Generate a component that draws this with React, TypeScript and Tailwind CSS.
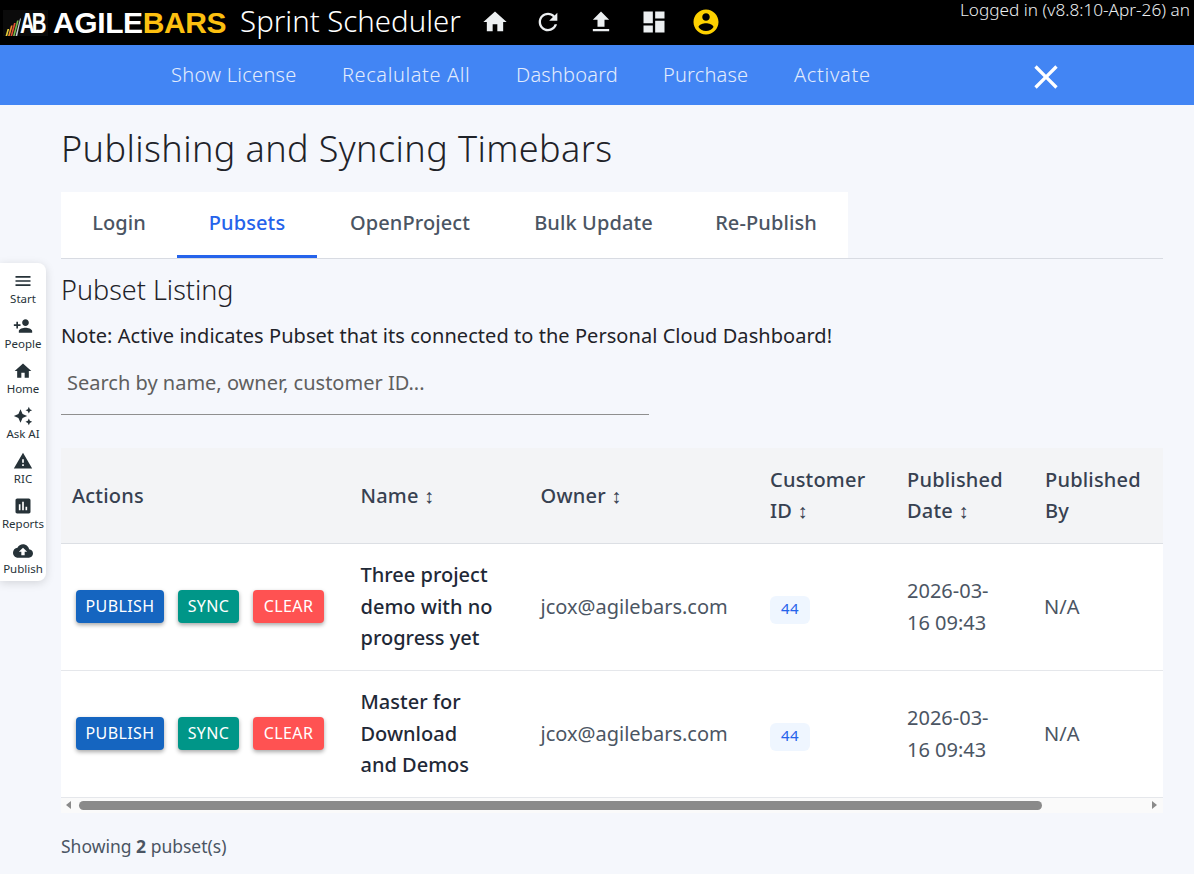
import type { ReactNode } from "react";

const ICONS = {
  home: "M10 20v-6h4v6h5v-8h3L12 3 2 12h3v8z",
  refresh:
    "M17.65 6.35C16.2 4.9 14.21 4 12 4c-4.42 0-7.99 3.58-7.99 8s3.57 8 7.99 8c3.73 0 6.84-2.55 7.73-6h-2.08c-.82 2.33-3.04 4-5.65 4-3.31 0-6-2.69-6-6s2.69-6 6-6c1.66 0 3.14.69 4.22 1.78L13 11h7V4l-2.35 2.35z",
  upload: "M9 16h6v-6h4l-7-7-7 7h4zm-4 2h14v2H5z",
  dashboard: "M3 13h8V3H3v10zm0 8h8v-6H3v6zm10 0h8V11h-8v10zm0-18v6h8V3h-8z",
  account:
    "M12 2C6.48 2 2 6.48 2 12s4.48 10 10 10 10-4.48 10-10S17.52 2 12 2zm0 3c1.66 0 3 1.34 3 3s-1.34 3-3 3-3-1.34-3-3 1.34-3 3-3zm0 14.2c-2.5 0-4.71-1.28-6-3.22.03-1.99 4-3.08 6-3.08 1.99 0 5.97 1.09 6 3.08-1.29 1.94-3.5 3.22-6 3.22z",
  close:
    "M19 6.41L17.59 5 12 10.59 6.41 5 5 6.41 10.59 12 5 17.59 6.41 19 12 13.41 17.59 19 19 17.59 13.41 12z",
  menu: "M3 18h18v-2H3v2zm0-5h18v-2H3v2zm0-7v2h18V6H3z",
  personAdd:
    "M15 12c2.21 0 4-1.79 4-4s-1.79-4-4-4-4 1.79-4 4 1.79 4 4 4zm-9-2V7H4v3H1v2h3v3h2v-3h3v-2H6zm9 4c-2.67 0-8 1.34-8 4v2h16v-2c0-2.66-5.33-4-8-4z",
  sparkle:
    "M19 9l1.25-2.75L23 5l-2.75-1.25L19 1l-1.25 2.75L15 5l2.75 1.25L19 9zm-7.5.5L9 4 6.5 9.5 1 12l5.5 2.5L9 20l2.5-5.5L17 12l-5.5-2.5zM19 15l-1.25 2.75L15 19l2.75 1.25L19 23l1.25-2.75L23 19l-2.75-1.25L19 15z",
  warning: "M1 21h22L12 2 1 21zm12-3h-2v-2h2v2zm0-4h-2v-4h2v4z",
  assessment:
    "M19 3H5c-1.1 0-2 .9-2 2v14c0 1.1.9 2 2 2h14c1.1 0 2-.9 2-2V5c0-1.1-.9-2-2-2zM9 17H7v-7h2v7zm4 0h-2V7h2v10zm4 0h-2v-4h2v4z",
  cloud:
    "M19.35 10.04C18.67 6.59 15.64 4 12 4 9.11 4 6.6 5.64 5.35 8.04 2.34 8.36 0 10.91 0 14c0 3.31 2.69 6 6 6h13c2.76 0 5-2.24 5-5 0-2.64-2.05-4.78-4.65-4.96zM14 13v4h-4v-4H7l5-5 5 5h-3z",
};

function Icon({ name, className }: { name: keyof typeof ICONS; className: string }) {
  return (
    <svg viewBox="0 0 24 24" fill="currentColor" className={className}>
      <path d={ICONS[name]} />
    </svg>
  );
}

function Logo() {
  return (
    <div className="flex items-center">
      <div className="relative h-[26px] w-[45px] shrink-0 bg-[#0b0b0b]">
        <svg viewBox="0 0 16 18" className="absolute left-[2px] top-[8px] h-[18px] w-[16px]">
          <path d="M0.5 18 L2.5 11 L4.2 11 L2.2 18z" fill="#e3cf3a" />
          <path d="M3 18 L6 7.5 L7.7 7.5 L4.7 18z" fill="#ee9030" />
          <path d="M5.5 18 L9 5 L10.7 5 L7.2 18z" fill="#e24f33" />
          <path d="M8 18 L12 2.5 L13.7 2.5 L9.7 18z" fill="#79b84a" />
          <path d="M10.5 18 L15 0.5 L16 0.5 L12.2 18z" fill="#c3ccd1" />
        </svg>
        <span className="absolute left-[17px] top-[-2px] origin-left scale-x-[0.7] font-['Liberation_Sans',sans-serif] text-[29px] font-bold leading-[30px] tracking-[-4px] text-white">
          AB
        </span>
      </div>
      <span className="ml-[5px] font-['Liberation_Sans',sans-serif] text-[30px] font-bold leading-[34px] tracking-[-0.4px] text-white">
        AGILE<span className="text-[#fcc010]">BARS</span>
      </span>
    </div>
  );
}

function TopBar() {
  return (
    <div className="relative flex h-[45px] items-center overflow-hidden bg-black pl-[3px]">
      <Logo />
      <span className="ml-[14px] whitespace-nowrap pb-[3px] text-[29.4px] font-light leading-[40px] text-white">
        Sprint Scheduler
      </span>
      <div className="ml-[20px] flex items-center gap-[25px] pb-[2px]">
        <Icon name="home" className="h-[28px] w-[28px] text-[#eceff1]" />
        <Icon name="refresh" className="h-[28px] w-[28px] text-[#eceff1]" />
        <Icon name="upload" className="h-[28px] w-[28px] text-[#eceff1]" />
        <Icon name="dashboard" className="h-[28px] w-[28px] text-[#eceff1]" />
        <Icon name="account" className="-ml-[2px] h-[30px] w-[30px] text-[#fdd100]" />
      </div>
      <span className="absolute left-[960px] top-0 whitespace-nowrap text-[17.2px] font-light leading-[20px] text-[#eceff1]">
        Logged in (v8.8:10-Apr-26) an
      </span>
    </div>
  );
}

function NavBar() {
  const links = [
    { label: "Show License", style: "w-[126px] tracking-[0.3px]" },
    { label: "Recalulate All", style: "w-[129px] tracking-[0.6px]" },
    { label: "Dashboard", style: "w-[102px] tracking-[0.2px]" },
    { label: "Purchase", style: "w-[86px] tracking-[0.2px]" },
    { label: "Activate", style: "w-[76px] tracking-[0.7px]" },
  ];
  return (
    <div className="flex h-[60px] items-center bg-[#4285f4] pl-[171px]">
      <div className="flex items-center gap-[45px]">
        {links.map((link) => (
          <span
            key={link.label}
            className={`${link.style} whitespace-nowrap text-[20px] font-light text-[#e3ecfd]`}
          >
            {link.label}
          </span>
        ))}
      </div>
      <Icon name="close" className="absolute left-[1026px] top-[57px] h-[40px] w-[40px] text-white" />
    </div>
  );
}

function SideRail() {
  const items: { name: keyof typeof ICONS; label: string }[] = [
    { name: "menu", label: "Start" },
    { name: "personAdd", label: "People" },
    { name: "home", label: "Home" },
    { name: "sparkle", label: "Ask AI" },
    { name: "warning", label: "RIC" },
    { name: "assessment", label: "Reports" },
    { name: "cloud", label: "Publish" },
  ];
  return (
    <div className="absolute left-0 top-[263px] flex h-[318px] w-[46px] flex-col items-center gap-[10px] rounded-r-lg bg-white pt-[8px] shadow-[0_2px_10px_rgba(0,0,0,0.14)]">
      {items.map((item) => (
        <div key={item.label} className="flex h-[35px] flex-col items-center text-[#263238]">
          <Icon name={item.name} className="h-[20px] w-[20px]" />
          <span className="text-[11.5px] leading-[15px]">{item.label}</span>
        </div>
      ))}
    </div>
  );
}

function Tabs() {
  const tabs = [
    { label: "Login", width: "w-[116px]" },
    { label: "Pubsets", width: "w-[140px]" },
    { label: "OpenProject", width: "w-[186px]" },
    { label: "Bulk Update", width: "w-[181px]" },
    { label: "Re-Publish", width: "w-[164px]" },
  ];
  return (
    <div className="mt-[17px] border-b border-[#d8dbe2]">
      <div className="flex h-[66px] w-[787px] bg-white">
        {tabs.map((tab) => (
          <div
            key={tab.label}
            className={
              tab.label === "Pubsets"
                ? `${tab.width} flex h-[66px] items-center justify-center border-b-[3px] border-[#2563eb] pb-[2px] text-[20px] font-medium tracking-[0.1px] text-[#2563eb]`
                : `${tab.width} flex h-[66px] items-center justify-center border-b-[3px] border-transparent pb-[2px] text-[20px] font-medium tracking-[0.1px] text-[#4b5563]`
            }
          >
            {tab.label}
          </div>
        ))}
      </div>
    </div>
  );
}

function ActionButton({ color, children }: { color: string; children: ReactNode }) {
  return (
    <button
      type="button"
      className={`flex h-[33px] items-center justify-center rounded-[4px] text-[16px] tracking-[0.4px] text-white shadow-[0_2px_4px_rgba(0,0,0,0.35)] ${color}`}
    >
      {children}
    </button>
  );
}

function Row({ name }: { name: ReactNode }) {
  return (
    <tr className="h-[127px] border-b border-[#e5e7eb] bg-white text-[20px] leading-[31.5px] text-[#4b5563]">
      <td className="pl-[15px]">
        <div className="flex gap-[14px]">
          <ActionButton color="w-[88px] bg-[#1565c0]">PUBLISH</ActionButton>
          <ActionButton color="w-[61px] bg-[#009688]">SYNC</ActionButton>
          <ActionButton color="w-[71px] bg-[#ff5252]">CLEAR</ActionButton>
        </div>
      </td>
      <td className="pl-[21.5px] pr-[26px] font-medium text-[#1f2937]">{name}</td>
      <td className="pl-[21.5px]">jcox@agilebars.com</td>
      <td className="pl-[21px]">
        <span className="mt-[6px] flex h-[28px] w-[40px] items-center justify-center rounded-[6px] bg-[#eff6ff] pb-[2px] text-[15px] tracking-[0.3px] text-[#2563eb]">
          44
        </span>
      </td>
      <td className="pl-[22px] pr-[20px]">2026-03-16 09:43</td>
      <td className="pl-[21px]">N/A</td>
    </tr>
  );
}

function Head({ pad, children }: { pad: string; children: ReactNode }) {
  return (
    <th className={`${pad} pr-[12px] text-left align-middle text-[20px] font-medium leading-[31.5px] tracking-[0.2px] text-[#374151]`}>
      {children}
    </th>
  );
}

function PubsetTable() {
  return (
    <div className="mt-[33px] w-[1102px] overflow-hidden">
      <table className="w-[1240px] table-fixed border-collapse">
        <colgroup>
          <col className="w-[278px]" />
          <col className="w-[180px]" />
          <col className="w-[230px]" />
          <col className="w-[136px]" />
          <col className="w-[138px]" />
          <col className="w-[278px]" />
        </colgroup>
        <thead>
          <tr className="h-[95px] border-b border-[#dcdfe4] bg-[#f3f4f6]">
            <Head pad="pl-[11px]">Actions</Head>
            <Head pad="pl-[21.5px]">Name ↕</Head>
            <Head pad="pl-[21.5px]">Owner ↕</Head>
            <Head pad="pl-[21px]">Customer ID ↕</Head>
            <Head pad="pl-[22px]">Published Date ↕</Head>
            <Head pad="pl-[22px] pr-[200px]">Published By</Head>
          </tr>
        </thead>
        <tbody>
          <Row name="Three project demo with no progress yet" />
          <Row name="Master for Download and Demos" />
        </tbody>
      </table>
      <div className="flex h-[15px] w-[1102px] items-center bg-[#fafafa]">
        <div className="ml-[5px] h-0 w-0 border-y-[4px] border-r-[5px] border-y-transparent border-r-[#8a8a8a]" />
        <div className="ml-[8px] h-[9px] w-[963px] rounded-full bg-[#8a8a8a]" />
        <div className="ml-auto mr-[6px] h-0 w-0 border-y-[4px] border-l-[5px] border-y-transparent border-l-[#8a8a8a]" />
      </div>
    </div>
  );
}

export default function App() {
  return (
    <div className="relative h-[874px] w-[1194px] overflow-hidden bg-[#f5f7fc] font-['Noto_Sans',sans-serif]">
      <TopBar />
      <NavBar />
      <SideRail />
      <main className="pl-[61px] pr-[31px]">
        <h1 className="mt-[18px] text-[36px] font-light leading-[52px] tracking-[0.4px] text-[#1f2329]">
          Publishing and Syncing Timebars
        </h1>
        <Tabs />
        <h2 className="mt-[12px] text-[27px] font-light leading-[38px] text-[#1f2329]">Pubset Listing</h2>
        <p className="mt-[11px] text-[20px] leading-[32px] tracking-[0.05px] text-[#1f2329]">
          Note: Active indicates Pubset that its connected to the Personal Cloud Dashboard!
        </p>
        <input
          readOnly
          placeholder="Search by name, owner, customer ID..."
          className="mt-[10px] block h-[53px] w-[588px] border-b border-[#8f8f8f] bg-transparent px-[6px] pb-[11px] text-[20px] outline-none placeholder:text-[#5f5f5f]"
        />
        <PubsetTable />
        <p className="mt-[23px] text-[17.5px] leading-[20px] text-[#4b5563]">
          Showing <span className="font-bold">2</span> pubset(s)
        </p>
      </main>
    </div>
  );
}
